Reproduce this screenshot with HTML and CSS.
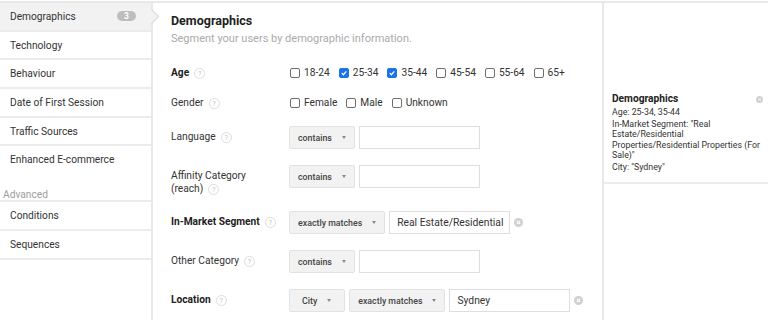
FILE: index.html
```html
<!DOCTYPE html>
<html>

<head>
  <meta name="viewport" content="width=device-width,initial-scale=1">
  <link rel="stylesheet" href="styles.css">
</head>

<body>
  <div class="page">
    <!-- Left menu -->
    <nav class="sidebar">
      <ul class="menu">
        <li class="item active">Demographics <span class="badge">3</span></li>
        <li class="item">Technology</li>
        <li class="item">Behaviour</li>
        <li class="item">Date of First Session</li>
        <li class="item">Traffic Sources</li>
        <li class="item">Enhanced E-commerce</li>
      </ul>
      <div class="group-label">Advanced</div>
      <ul class="menu">
        <li class="item">Conditions</li>
        <li class="item">Sequences</li>
      </ul>
    </nav>

    <!-- Segment editor -->
    <main class="editor">
      <h1 class="title">Demographics</h1>
      <p class="hint">Segment your users by demographic information.</p>

      <div class="form">
        <div class="row check-row">
          <div class="label"><b>Age</b><span class="help">?</span></div>
          <div class="checks">
            <span class="check"><span class="box"></span>18-24</span>
            <span class="check"><span class="box checked"><svg viewBox="0 0 10 10"><path d="M2.2 5.2 4.2 7.2 7.9 3" fill="none" stroke="#fff" stroke-width="1.6"/></svg></span>25-34</span>
            <span class="check"><span class="box checked"><svg viewBox="0 0 10 10"><path d="M2.2 5.2 4.2 7.2 7.9 3" fill="none" stroke="#fff" stroke-width="1.6"/></svg></span>35-44</span>
            <span class="check"><span class="box"></span>45-54</span>
            <span class="check"><span class="box"></span>55-64</span>
            <span class="check"><span class="box"></span>65+</span>
          </div>
        </div>

        <div class="row check-row">
          <div class="label">Gender<span class="help">?</span></div>
          <div class="checks">
            <span class="check"><span class="box"></span>Female</span>
            <span class="check"><span class="box"></span>Male</span>
            <span class="check"><span class="box"></span>Unknown</span>
          </div>
        </div>

        <div class="row">
          <div class="label">Language<span class="help">?</span></div>
          <div class="controls">
            <span class="select">contains</span>
            <span class="input"></span>
          </div>
        </div>

        <div class="row">
          <div class="label">Affinity Category<br>(reach)<span class="help">?</span></div>
          <div class="controls">
            <span class="select">contains</span>
            <span class="input"></span>
          </div>
        </div>

        <div class="row">
          <div class="label"><b>In-Market Segment</b><span class="help">?</span></div>
          <div class="controls">
            <span class="select">exactly matches</span>
            <span class="input">Real Estate/Residential</span>
            <span class="clear"><svg viewBox="0 0 10 10"><circle cx="5" cy="5" r="5" fill="#d0d0d0"/><path d="M3.2 3.2 6.8 6.8M6.8 3.2 3.2 6.8" stroke="#fff" stroke-width="1.3"/></svg></span>
          </div>
        </div>

        <div class="row">
          <div class="label">Other Category<span class="help">?</span></div>
          <div class="controls">
            <span class="select">contains</span>
            <span class="input"></span>
          </div>
        </div>

        <div class="row">
          <div class="label"><b>Location</b><span class="help">?</span></div>
          <div class="controls">
            <span class="select city">City</span>
            <span class="select">exactly matches</span>
            <span class="input">Sydney</span>
            <span class="clear"><svg viewBox="0 0 10 10"><circle cx="5" cy="5" r="5" fill="#d0d0d0"/><path d="M3.2 3.2 6.8 6.8M6.8 3.2 3.2 6.8" stroke="#fff" stroke-width="1.3"/></svg></span>
          </div>
        </div>
      </div>
    </main>

    <!-- Segment summary -->
    <aside class="summary">
      <div class="summary-block">
        <div class="summary-head">
          <b>Demographics</b>
          <span class="clear small"><svg viewBox="0 0 10 10"><circle cx="5" cy="5" r="5" fill="#d0d0d0"/><path d="M3.2 3.2 6.8 6.8M6.8 3.2 3.2 6.8" stroke="#fff" stroke-width="1.4"/></svg></span>
        </div>
        <p>Age: 25-34, 35-44</p>
        <p>In-Market Segment: "Real Estate/Residential Properties/Residential Properties (For Sale)"</p>
        <p>City: "Sydney"</p>
      </div>
    </aside>
  </div>
</body>

</html>
```

FILE: styles.css
```css
/* Page frame */

body {
  margin: 0;
  overflow: hidden;
  font-family: Roboto, "Liberation Sans", sans-serif;
  color: #333;
  background: #fff;
}

.page {
  display: flex;
  height: 317px;
  margin-top: 1px;
  border-top: 2px solid #e8e8e8;
}

/* Left menu */

.sidebar {
  flex: none;
  width: 151px;
  border-right: 2px solid #e8e8e8;
}

.menu {
  list-style: none;
  margin: 0;
  padding: 0;
}

.item {
  position: relative;
  display: flex;
  align-items: center;
  justify-content: space-between;
  height: 26.7px;
  padding: 0 15px 0 10px;
  border-bottom: 2px solid #ececec;
  font-size: 10.2px;
  color: #333;
}

.menu:first-child .item:last-child {
  border-bottom: none;
}

.item.active {
  background-color: #f2f2f2;
}

/* Pointer from the active tab into the editor */

.item.active::after {
  content: "";
  position: absolute;
  z-index: 1;
  top: 8px;
  right: -6px;
  width: 10px;
  height: 10px;
  background-color: #f2f2f2;
  border-top: 1px solid #d8d8d8;
  border-right: 1px solid #d8d8d8;
  transform: rotate(45deg);
}

.badge {
  display: inline-flex;
  align-items: center;
  justify-content: center;
  width: 19px;
  height: 10px;
  border-radius: 5px;
  background-color: #bdbdbd;
  color: #fff;
  font-size: 8.5px;
  font-weight: bold;
}

.group-label {
  padding: 16px 3px 0;
  line-height: 11px;
  font-size: 10.2px;
  color: #9e9e9e;
  border-bottom: 2px solid #ececec;
}

/* Editor */

.editor {
  flex: 1;
  padding: 10px 18px 0;
}

.title {
  margin: 0;
  font-size: 12.5px;
  line-height: 16px;
  color: #222;
}

.hint {
  margin: 3px 0 0;
  font-size: 11px;
  line-height: 14px;
  color: #aaa;
}

.form {
  display: flex;
  flex-direction: column;
  gap: 16px;
  margin-top: 20px;
}

.row {
  display: flex;
  align-items: flex-start;
}

.label {
  flex: none;
  width: 118px;
  padding-top: 4px;
  font-size: 10.2px;
  line-height: 13px;
  color: #333;
}

.label b {
  color: #222;
}

.check-row .label {
  padding-top: 0;
  line-height: 14px;
  height: 14px;
}

.help {
  display: inline-flex;
  align-items: center;
  justify-content: center;
  box-sizing: border-box;
  width: 11px;
  height: 11px;
  margin-left: 5px;
  border: 1px solid #ddd;
  border-radius: 50%;
  font-size: 7.5px;
  line-height: 1;
  color: #c4c4c4;
  vertical-align: middle;
}

/* Checkboxes */

.checks {
  display: flex;
  gap: 8px;
  height: 14px;
  align-items: center;
}

.check {
  display: inline-flex;
  align-items: center;
  gap: 4px;
  font-size: 10.2px;
  line-height: 14px;
  color: #333;
}

.box {
  display: inline-block;
  box-sizing: border-box;
  width: 10px;
  height: 10px;
  margin-left: 1px;
  border: 1px solid #6f6f6f;
  border-radius: 2px;
}

.box.checked {
  background-color: #1a73e8;
  border-color: #1a73e8;
}

.box svg {
  display: block;
  width: 8px;
  height: 8px;
}

/* Selects and inputs */

.controls {
  display: flex;
  align-items: center;
  gap: 4px;
  height: 23px;
}

.select {
  display: inline-flex;
  align-items: center;
  gap: 10px;
  box-sizing: border-box;
  height: 23px;
  padding: 0 8px;
  background-color: #f2f2f2;
  border: 1px solid #e2e2e2;
  border-radius: 2px;
  font-size: 8.8px;
  font-weight: 500;
  color: #444;
}

.select::after {
  content: "";
  border-left: 2.5px solid transparent;
  border-right: 2.5px solid transparent;
  border-top: 3px solid #8a8a8a;
}

.select.city {
  padding: 0 13px 0 12px;
}

.input {
  display: inline-flex;
  align-items: center;
  box-sizing: border-box;
  width: 121px;
  height: 23px;
  padding: 0 4px 0 7px;
  border: 1px solid #dedede;
  font-size: 10.3px;
  white-space: nowrap;
  overflow: hidden;
  color: #333;
}

.clear svg {
  display: block;
  width: 9px;
  height: 9px;
}

/* Summary panel */

.summary {
  flex: none;
  width: 164px;
  border-left: 2px solid #e8e8e8;
}

.summary-block {
  padding: 90px 2px 9.5px 8px;
  border-bottom: 2px solid #ececec;
  font-size: 8.8px;
  color: #333;
}

.summary-head {
  display: flex;
  align-items: center;
  justify-content: space-between;
  padding-right: 3px;
  line-height: 12px;
  font-size: 10.2px;
  color: #222;
}

.clear.small svg {
  width: 7px;
  height: 7px;
}

.summary-block p {
  margin: 1.5px 0 0;
  line-height: 10.5px;
}
```
